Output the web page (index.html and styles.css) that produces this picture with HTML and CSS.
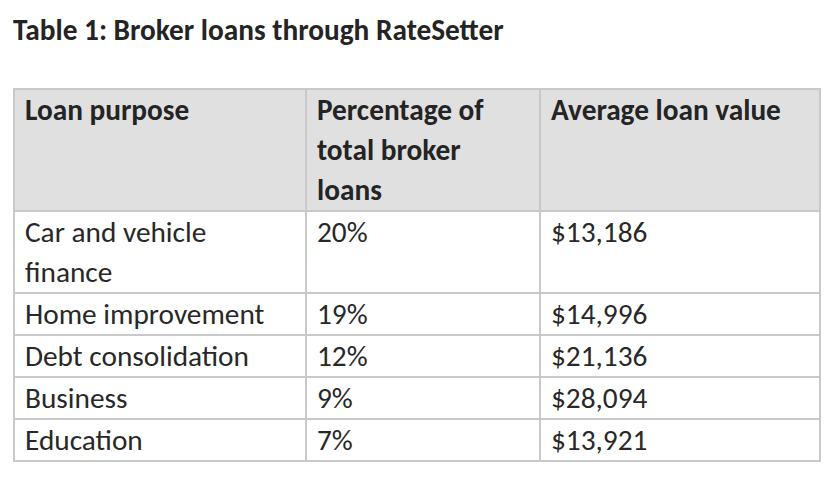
FILE: index.html
```html
<!DOCTYPE html>
<html lang="en">
<head>
<meta charset="utf-8">
<title>Broker loans through RateSetter</title>
<link rel="stylesheet" href="styles.css">
</head>
<body>
<div class="page">
  <h1 class="caption">Table 1: Broker loans through RateSetter</h1>
  <table class="loans">
    <thead>
      <tr>
        <th class="c1">Loan purpose</th>
        <th class="c2">Percentage of total broker loans</th>
        <th class="c3">Average loan value</th>
      </tr>
    </thead>
    <tbody>
      <tr><td>Car and vehicle finance</td><td>20%</td><td>$13,186</td></tr>
      <tr><td>Home improvement</td><td>19%</td><td>$14,996</td></tr>
      <tr><td>Debt consolidation</td><td>12%</td><td>$21,136</td></tr>
      <tr><td>Business</td><td>9%</td><td>$28,094</td></tr>
      <tr><td>Education</td><td>7%</td><td>$13,921</td></tr>
    </tbody>
  </table>
</div>
</body>
</html>
```

FILE: styles.css
```css
html, body {
  margin: 0;
  padding: 0;
  background: #ffffff;
}

.page {
  padding: 10px 0 0 13px;
  font-family: "Carlito", "Open Sans", "Liberation Sans", sans-serif;
  color: #282828;
}

.caption {
  margin: 0 0 38px 0;
  font-size: 29.3px;
  line-height: 40px;
  font-weight: 700;
  color: #242424;
}

.loans {
  width: 808px;
  table-layout: fixed;
  border-collapse: separate;
  border-spacing: 0;
  border-top: 2px solid #c9c9c9;
  border-left: 2px solid #c9c9c9;
  font-size: 29.3px;
  line-height: 40px;
}

.loans th,
.loans td {
  padding: 0 10px;
  text-align: left;
  vertical-align: top;
  border-right: 2px solid #c9c9c9;
  border-bottom: 2px solid #c9c9c9;
}

.loans th {
  background: #e0e0e0;
  font-weight: 700;
  color: #242424;
}

.loans .c1 { width: 270px; }
.loans .c2 { width: 212px; }
.loans .c3 { width: 258px; }
```
